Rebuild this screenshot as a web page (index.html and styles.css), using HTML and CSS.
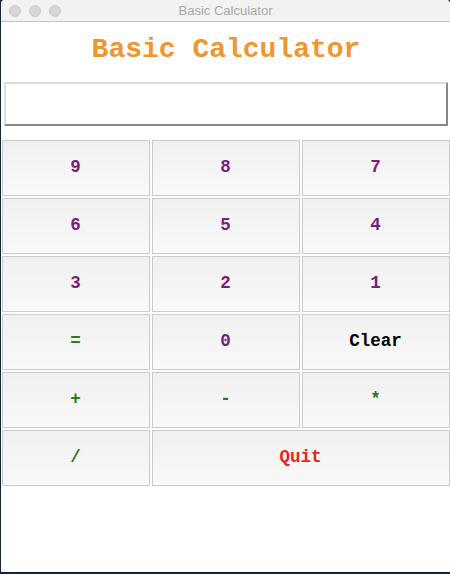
FILE: index.html
```html
<!DOCTYPE html>
<html>
<head>
<meta charset="utf-8">
<link rel="stylesheet" href="styles.css">
</head>
<body>
<div class="window">
  <div class="titlebar">
    <div class="lights"><span class="light"></span><span class="light"></span><span class="light"></span></div>
    <div class="wintitle">Basic Calculator</div>
  </div>
  <div class="content">
    <h1 class="heading">Basic Calculator</h1>
    <div class="entry"></div>
    <div class="keys">
      <div class="key num">9</div>
      <div class="key num">8</div>
      <div class="key num">7</div>
      <div class="key num">6</div>
      <div class="key num">5</div>
      <div class="key num">4</div>
      <div class="key num">3</div>
      <div class="key num">2</div>
      <div class="key num">1</div>
      <div class="key op">=</div>
      <div class="key num">0</div>
      <div class="key clear">Clear</div>
      <div class="key op">+</div>
      <div class="key op">-</div>
      <div class="key op">*</div>
      <div class="key op">/</div>
      <div class="key quit">Quit</div>
    </div>
  </div>
</div>
</body>
</html>
```
FILE: styles.css
```css
html, body {
  margin: 0;
  padding: 0;
  background: #16263a;
  width: 450px;
  height: 574px;
  overflow: hidden;
}
.window {
  margin-left: 1px;
  width: 449px;
  height: 572px;
  background: #ffffff;
  display: flex;
  flex-direction: column;
  border-radius: 4px 4px 0 0;
  overflow: hidden;
}
.titlebar {
  height: 21px;
  border-bottom: 1px solid #c4c4c4;
  background: #f2f2f2;
  display: flex;
  align-items: center;
  position: relative;
}
.lights {
  display: flex;
  gap: 8px;
  padding-left: 8px;
  margin-top: 1px;
}
.light {
  width: 12px;
  height: 12px;
  border-radius: 50%;
  background: #d6d6d6;
  box-sizing: border-box;
  border: 1px solid #cbcbcb;
}
.wintitle {
  position: absolute;
  left: 0;
  right: 0;
  top: 3px;
  text-align: center;
  font-family: "Liberation Sans", Arial, sans-serif;
  font-size: 13px;
  color: #a9a9a9;
  line-height: 16px;
}
.content {
  display: flex;
  flex-direction: column;
}
.heading {
  margin: 12px 0 0 0;
  text-align: center;
  font-family: "Liberation Mono", "Courier New", monospace;
  font-weight: bold;
  font-size: 28px;
  line-height: 32px;
  color: #f0962f;
  padding-left: 1px;
}
.entry {
  margin: 16px 2px 0 3px;
  height: 40px;
  border-style: solid;
  border-width: 2px;
  border-color: #dcdcdc #888888 #888888 #dcdcdc;
  background: #ffffff;
}
.keys {
  margin: 14px 0 0 1px;
  display: grid;
  grid-template-columns: 148px 148px 148px;
  grid-auto-rows: 56px;
  gap: 2px;
}
.key {
  box-sizing: border-box;
  border: 1px solid #cbcbcb;
  background: linear-gradient(#f0f0f0, #f9f9f9);
  display: flex;
  align-items: center;
  justify-content: center;
  font-family: "Liberation Mono", "Courier New", monospace;
  font-weight: bold;
  font-size: 17.5px;
  padding-bottom: 3px;
  padding-right: 1px;
}
.num { color: #7a1e7c; }
.op { color: #2d7a1c; }
.clear { color: #000000; }
.quit {
  color: #e3241f;
  grid-column: span 2;
}
```
